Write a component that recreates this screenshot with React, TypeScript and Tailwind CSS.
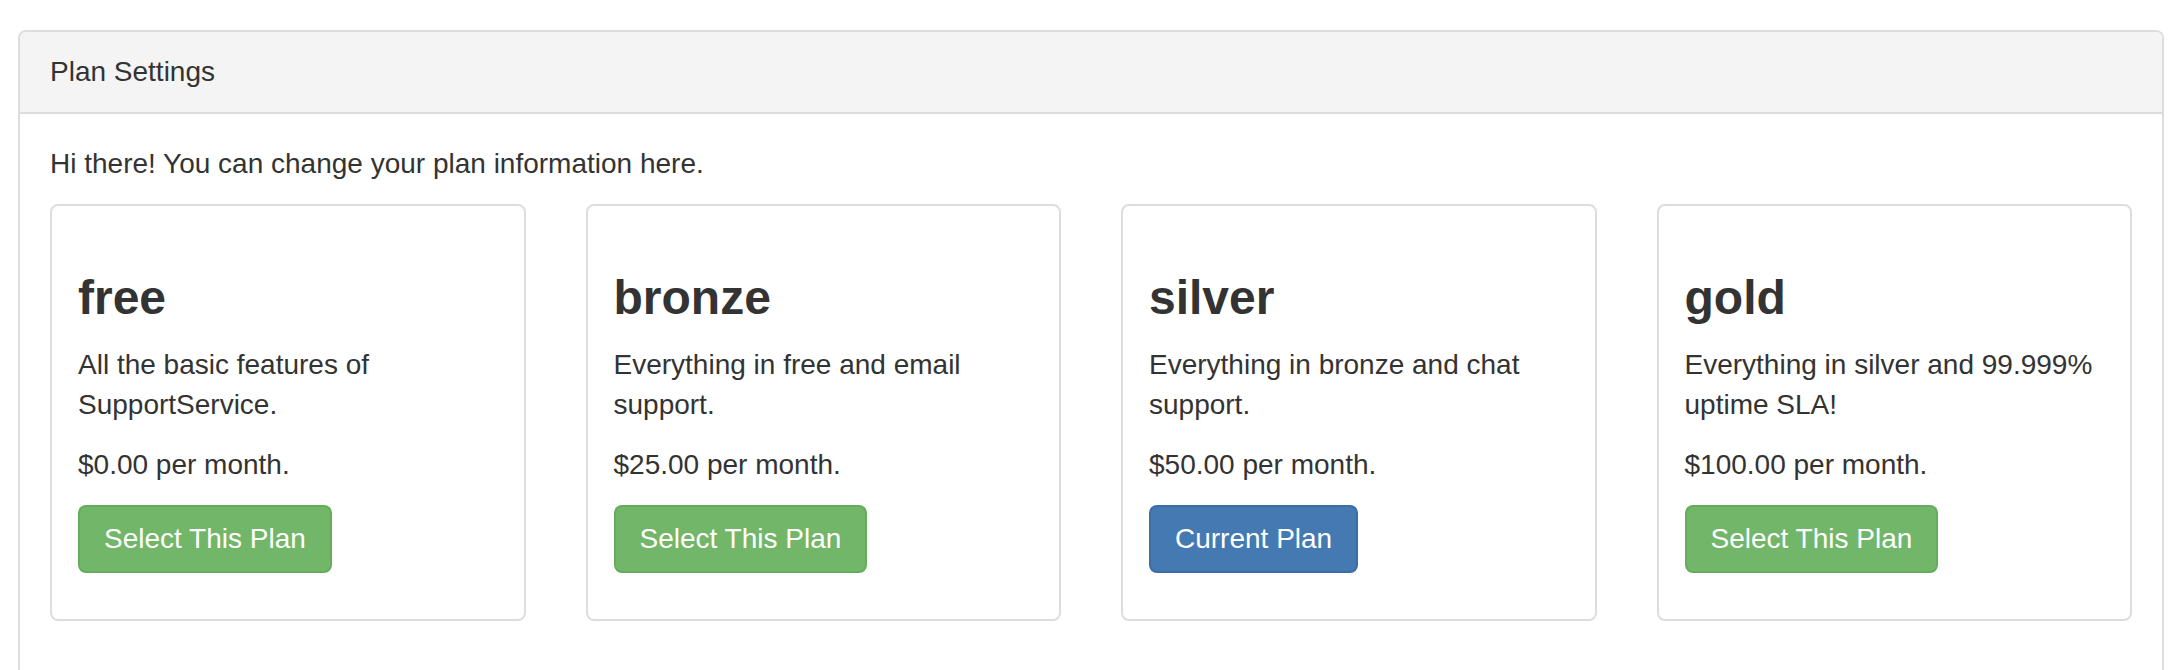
type Plan = {
  name: string;
  description: string;
  price: string;
  current?: boolean;
};

const plans: Plan[] = [
  { name: 'free', description: 'All the basic features of SupportService.', price: '$0.00' },
  { name: 'bronze', description: 'Everything in free and email support.', price: '$25.00' },
  { name: 'silver', description: 'Everything in bronze and chat support.', price: '$50.00', current: true },
  { name: 'gold', description: 'Everything in silver and 99.999% uptime SLA!', price: '$100.00' },
];

function PlanCard({ plan }: { plan: Plan }) {
  return (
    <div className="rounded-[8px] border-2 border-[#dddddd] bg-white p-[8px] mb-[40px]">
      <div className="p-[18px]">
        <h3 className="mt-[40px] mb-[20px] text-[48px] leading-[1.1] font-bold text-[#333333]">
          {plan.name}
        </h3>
        <p className="mb-[20px]">{plan.description}</p>
        <p className="mb-[20px]">{plan.price} per month.</p>
        <p className="mb-[20px]">
          {plan.current ? (
            <button className="rounded-[8px] border-2 border-[#3c6da3] bg-[#4579b1] px-[24px] py-[12px] text-[28px] leading-[40px] text-white">
              Current Plan
            </button>
          ) : (
            <button className="rounded-[8px] border-2 border-[#64ad5b] bg-[#72b669] px-[24px] py-[12px] text-[28px] leading-[40px] text-white">
              Select This Plan
            </button>
          )}
        </p>
      </div>
    </div>
  );
}

function App() {
  return (
    <div className="min-h-screen bg-white px-[18px] pt-[30px] font-['Liberation_Sans','Helvetica',sans-serif] text-[28px] leading-[40px] text-[#333333]">
      <div className="rounded-[8px] border-2 border-[#dddddd] bg-white">
        <div className="rounded-t-[6px] border-b-2 border-[#dddddd] bg-[#f4f4f4] px-[30px] py-[20px]">
          Plan Settings
        </div>
        <div className="p-[30px]">
          <p className="mb-[20px]">Hi there! You can change your plan information here.</p>
          <div className="grid grid-cols-4 gap-x-[60px]">
            {plans.map((plan) => (
              <PlanCard key={plan.name} plan={plan} />
            ))}
          </div>
        </div>
      </div>
    </div>
  );
}

export default App;
